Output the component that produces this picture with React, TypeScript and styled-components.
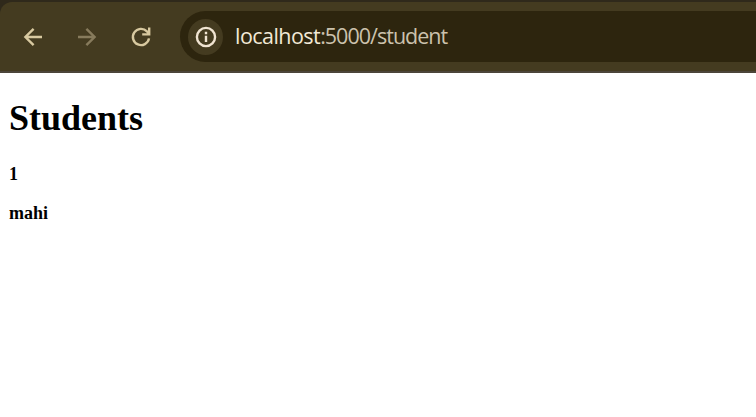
import React from "react";
import styled, { createGlobalStyle } from "styled-components";

const GlobalStyle = createGlobalStyle`
  html, body { margin: 0; padding: 0; background: #fff; overflow: hidden; }
  * { box-sizing: border-box; }
`;

const Browser = styled.div`
  height: 100vh;
  display: flex;
  flex-direction: column;
  background: #fff;
`;

const TabStrip = styled.header`
  height: 73px;
  flex: none;
  padding-top: 2px;
  background: #2f291b;
`;

const Toolbar = styled.nav`
  height: 71px;
  display: flex;
  align-items: flex-start;
  padding: 9px 0 0 15px;
  background: #443b20;
  border-bottom: 2px solid #4c453a;
  border-top-left-radius: 12px;
`;

const NavButton = styled.button<{ $dim?: boolean }>`
  width: 36px;
  height: 51px;
  margin-right: 18px;
  padding: 0;
  border: 0;
  background: none;
  display: flex;
  align-items: center;
  justify-content: center;
  color: ${(p) => (p.$dim ? "#877b5c" : "#d8c9a0")};
`;

const AddressBar = styled.div`
  flex: 1;
  height: 51px;
  margin-left: 3px;
  padding-left: 8px;
  display: flex;
  align-items: center;
  background: #2d250e;
  border-radius: 26px 0 0 26px;
`;

const SiteInfo = styled.span`
  width: 35px;
  height: 36px;
  border-radius: 50%;
  background: #443b20;
  color: #f0e4d2;
  display: flex;
  align-items: center;
  justify-content: center;
`;

const Url = styled.span`
  margin: 0 0 2px 12px;
  font: 21.5px/30px "Open Sans", "Noto Sans", sans-serif;
  letter-spacing: -0.98px;
  white-space: nowrap;
  color: #cbc2ad;
`;

const Host = styled.span`
  letter-spacing: -0.55px;
  color: #f2e9d6;
`;

const Page = styled.main`
  padding: 0 9px;
  color: #000;
  font-family: "Liberation Serif", "Times New Roman", serif;
`;

const Title = styled.h1`
  margin: 24px 0 25px;
  font-size: 36px;
  line-height: 42px;
`;

const Field = styled.h4`
  margin: 0 0 18px;
  font-size: 18px;
  line-height: 21px;
`;

const Icon = ({ size, children }: { size: number; children: React.ReactNode }) => (
  <svg width={size} height={size} viewBox={`0 0 ${size} ${size}`} fill="none" stroke="currentColor" strokeWidth="2.4">
    {children}
  </svg>
);

export default function App() {
  return (
    <>
      <GlobalStyle />
      <Browser>
        <TabStrip>
          <Toolbar>
            <NavButton aria-label="Back">
              <Icon size={24}>
                <path d="M21 12H4.5M12.6 3.8L4.4 12L12.6 20.2" />
              </Icon>
            </NavButton>
            <NavButton $dim aria-label="Forward">
              <Icon size={24}>
                <path d="M3 12H19.5M11.4 3.8L19.6 12L11.4 20.2" />
              </Icon>
            </NavButton>
            <NavButton aria-label="Reload">
              <Icon size={24}>
                <path d="M20 13.4A8.1 8.1 0 1 1 17.9 6.4L20 8.5M20.2 2.6V9.4H13.2" />
              </Icon>
            </NavButton>
            <AddressBar>
              <SiteInfo>
                <Icon size={22}>
                  <circle cx="11" cy="11" r="9.1" />
                  <path d="M11 9.8V16M11 5.8V8.2" />
                </Icon>
              </SiteInfo>
              <Url>
                <Host>localhost</Host>:5000/student
              </Url>
            </AddressBar>
          </Toolbar>
        </TabStrip>
        <Page>
          <Title>Students</Title>
          <Field>1</Field>
          <Field>mahi</Field>
        </Page>
      </Browser>
    </>
  );
}
